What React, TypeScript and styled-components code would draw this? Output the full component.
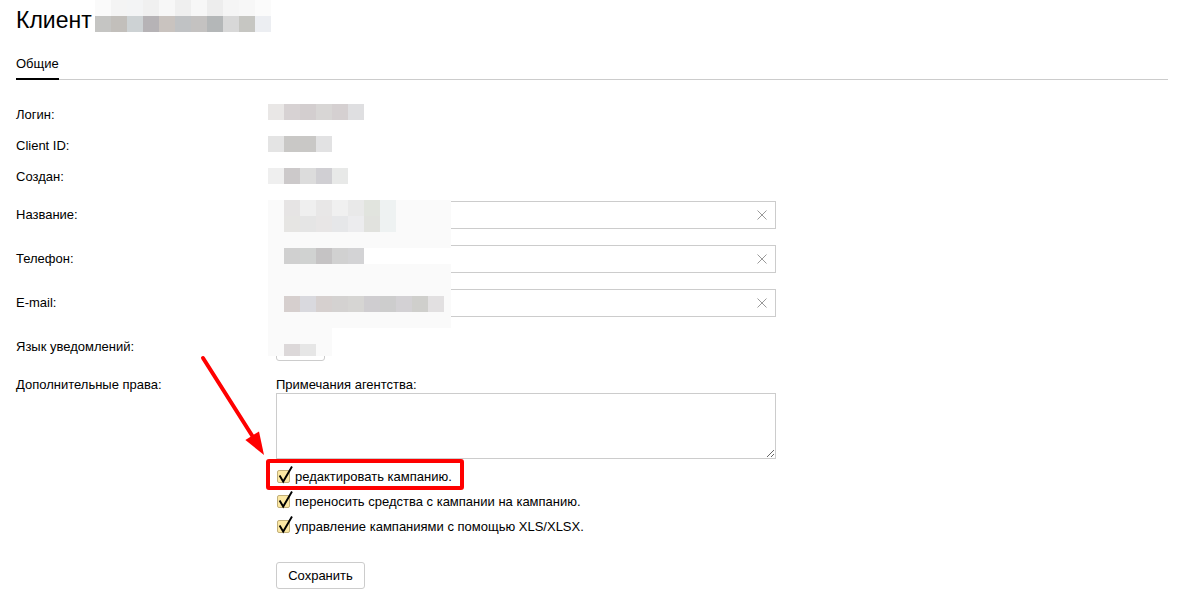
import React from "react";
import styled, { createGlobalStyle } from "styled-components";

const GlobalStyle = createGlobalStyle`
  html, body { margin: 0; padding: 0; background: #fff; }
  body {
    font-family: "Liberation Sans", Arial, sans-serif;
    font-size: 13px;
    color: #000;
  }
`;

const Page = styled.div`
  position: relative;
  padding: 0 10px 0 16px;
  height: 597px;
  box-sizing: border-box;
  overflow: hidden;
`;

const TitleRow = styled.div`
  display: flex;
  align-items: flex-start;
  height: 32px;
`;

const Title = styled.h1`
  margin: 8px 3px 0 0;
  font-size: 23px;
  line-height: 24px;
  font-weight: normal;
`;

const Mosaic = styled.div<{ $cols: string; $rows?: string; $top?: number }>`
  display: grid;
  grid-template-columns: ${(p) => p.$cols};
  grid-template-rows: ${(p) => p.$rows || "16px"};
  margin-top: ${(p) => p.$top ?? 0}px;
  align-self: start;
`;

const Cell = styled.span<{ $c: string }>`
  display: block;
  background: ${(p) => p.$c};
`;

const Overlay = styled(Mosaic)<{ $x: number; $y: number }>`
  position: absolute;
  left: ${(p) => p.$x}px;
  top: ${(p) => p.$y}px;
  margin: 0;
`;

const TabBar = styled.div`
  display: flex;
  border-bottom: 1px solid #cccccc;
`;

const Tab = styled.div<{ $active?: boolean }>`
  padding: 24px 0 6px;
  line-height: 16px;
  margin-bottom: -1px;
  border-bottom: 2px solid ${(p) => (p.$active ? "#000" : "transparent")};
`;

const Info = styled.div`
  margin-top: 19px;
`;

const InfoRow = styled.div`
  display: grid;
  grid-template-columns: 252px auto;
  height: 31px;
  line-height: 31px;
`;

const Label = styled.div`
  line-height: 16px;
`;

const InfoLabel = styled.div`
  line-height: 31px;
`;

const Form = styled.div`
  margin-top: 9px;
  display: flex;
  flex-direction: column;
  gap: 16px;
`;

const FormRow = styled.div<{ $align?: string }>`
  display: grid;
  grid-template-columns: 260px 500px;
  align-items: ${(p) => p.$align || "center"};
`;

const InputBox = styled.div`
  display: flex;
  align-items: center;
  height: 28px;
  border: 1px solid #cccccc;
  box-sizing: border-box;
  background: #fff;
`;

const TextInput = styled.input`
  flex: 1;
  min-width: 0;
  border: none;
  outline: none;
  height: 100%;
  padding: 0 8px;
  font: inherit;
  background: transparent;
`;

const ClearIcon = styled.svg`
  width: 10px;
  height: 10px;
  margin-right: 8px;
  flex: none;
`;

const SelectButton = styled.button`
  display: block;
  width: 49px;
  height: 28px;
  border: 1px solid #cccccc;
  border-radius: 3px;
  background: #fff;
  padding: 0;
`;

const NotesLabel = styled.div`
  line-height: 16px;
`;

const NotesArea = styled.textarea`
  display: block;
  width: 500px;
  height: 66px;
  margin: 0;
  border: 1px solid #cccccc;
  box-sizing: border-box;
  resize: both;
  font: inherit;
  padding: 4px 6px;
`;

const CheckList = styled.div`
  margin-top: 5px;
  display: flex;
  flex-direction: column;
`;

const CheckRow = styled.label<{ $highlight?: boolean }>`
  position: relative;
  display: flex;
  align-items: center;
  gap: 5px;
  height: 25px;
  padding-left: 1px;
  line-height: 16px;
  width: fit-content;

  &::after {
    content: "";
    display: ${(p) => (p.$highlight ? "block" : "none")};
    position: absolute;
    left: -10px;
    top: -5px;
    width: 198px;
    height: 31px;
    border: 4px solid #ff0000;
    border-radius: 3px;
    box-sizing: border-box;
  }
`;

const Box = styled.span`
  position: relative;
  flex: none;
  width: 13px;
  height: 13px;
  box-sizing: border-box;
  border: 1px solid #c2b07a;
  border-radius: 2px;
  background: #fce8a3;
`;

const CheckMark = styled.svg`
  position: absolute;
  left: -1px;
  top: -1px;
  width: 13px;
  height: 13px;
  overflow: visible;
`;

const SaveButton = styled.button`
  display: block;
  margin-top: 23px;
  width: 89px;
  height: 27px;
  border: 1px solid #cccccc;
  border-radius: 3px;
  background: #fff;
  font: inherit;
  color: #000;
  padding: 0;
`;

const Arrow = styled.svg`
  position: absolute;
  left: 195px;
  top: 350px;
  width: 80px;
  height: 112px;
  overflow: visible;
`;

const F = "#fafafa";
const T = "transparent";
const W = "#ffffff";

const titleCells = [
  ["#fafafa", "#f4f4f4", "#f3f4f5", "#f0f0f0", "#f7f7f7", "#efefef", "#f7f7f7", "#ededed", "#f5f5f5", "#f7f7f7", "#fbfbfb"],
  ["#c5c5c3", "#c2bfbb", "#cdd2d4", "#b6b3b6", "#c9c3bf", "#c0c2c4", "#c4c2c1", "#b4b7b8", "#d8d8d8", "#c6c6c2", "#eceef2"],
];

const loginCells = ["#e9e7e6", "#d7d2d3", "#d3cecf", "#d8d6d5", "#d5d0d1", "#dfdfe1"];
const idCells = ["#e4e4e4", "#c9c8c6", "#c9c8c6", "#e2e2e3"];
const createdCells = ["#efefef", "#ccc9ca", "#dcdcdc", "#d0cfd3", "#e8e9e8"];

const overlayCells: string[][] = [
  [F, "#e6e4e4", "#efefef", "#e8e7e7", "#f0f0f0", "#e9e9e9", "#e1e4de", "#eef2f2", F, F, F, F],
  [F, "#e6e5e3", "#e5e5e5", "#e8e6e6", "#e6e7e9", "#ececee", "#e1e2de", "#eef2f2", F, F, F, F],
  [F, F, F, F, F, F, F, F, F, F, F, F],
  [F, "#d0d0d0", "#d0d2d1", "#c5c3c4", "#d1d1d1", "#d3d3d5", W, W, W, W, W, W],
  [F, F, F, F, F, F, F, F, F, F, F, F],
  [F, F, F, F, F, F, F, F, F, F, F, F],
  [F, "#d6cfce", "#d9d9de", "#d6d0cf", "#d4d2d1", "#d6d5d3", "#cfcdd0", "#cdcdcd", "#d3d1d4", "#cfcfcc", "#e2e0e1", F],
  [F, F, F, F, F, F, F, F, F, F, F, F],
  [F, F, F, F, T, T, T, T, T, T, T, T],
  [F, "#dcd8d9", "#e6e6e6", F, T, T, T, T, T, T, T, T],
];

const Cells: React.FC<{ colors: string[] }> = ({ colors }) => (
  <>
    {colors.map((c, i) => (
      <Cell key={i} $c={c} />
    ))}
  </>
);

const Clear = () => (
  <ClearIcon viewBox="0 0 10 10">
    <path d="M0.5 0.5 L9.5 9.5 M9.5 0.5 L0.5 9.5" stroke="#9a9a9a" strokeWidth="1" fill="none" />
  </ClearIcon>
);

const InputField: React.FC = () => (
  <InputBox>
    <TextInput />
    <Clear />
  </InputBox>
);

const Check: React.FC<{ text: string; highlight?: boolean }> = ({ text, highlight }) => (
  <CheckRow $highlight={highlight}>
    <Box>
      <CheckMark viewBox="0 0 13 13">
        <path d="M2.6 5.6 L6.2 11.6 L15 -3.4" stroke="#000" strokeWidth="1.9" fill="none" strokeLinejoin="miter" />
      </CheckMark>
    </Box>
    <span>{text}</span>
  </CheckRow>
);

export default function App() {
  return (
    <>
      <GlobalStyle />
      <Page>
        <TitleRow>
          <Title>Клиент</Title>
          <Mosaic $cols="repeat(11, 16px)" $rows="16px 16px">
            <Cells colors={titleCells[0]} />
            <Cells colors={titleCells[1]} />
          </Mosaic>
        </TitleRow>

        <TabBar>
          <Tab $active>Общие</Tab>
        </TabBar>

        <Info>
          <InfoRow>
            <InfoLabel>Логин:</InfoLabel>
            <Mosaic $cols="repeat(6, 16px)" $top={5}>
              <Cells colors={loginCells} />
            </Mosaic>
          </InfoRow>
          <InfoRow>
            <InfoLabel>Client ID:</InfoLabel>
            <Mosaic $cols="repeat(4, 16px)" $top={6}>
              <Cells colors={idCells} />
            </Mosaic>
          </InfoRow>
          <InfoRow>
            <InfoLabel>Создан:</InfoLabel>
            <Mosaic $cols="repeat(5, 16px)" $top={7}>
              <Cells colors={createdCells} />
            </Mosaic>
          </InfoRow>
        </Info>

        <Form>
          <FormRow>
            <Label>Название:</Label>
            <InputField />
          </FormRow>
          <FormRow>
            <Label>Телефон:</Label>
            <InputField />
          </FormRow>
          <FormRow>
            <Label>E-mail:</Label>
            <InputField />
          </FormRow>
          <FormRow>
            <Label>Язык уведомлений:</Label>
            <div>
              <SelectButton aria-label="Язык" />
            </div>
          </FormRow>
          <FormRow $align="start">
            <Label>Дополнительные права:</Label>
            <div>
              <NotesLabel>Примечания агентства:</NotesLabel>
              <NotesArea />
              <CheckList>
                <Check text="редактировать кампанию." highlight />
                <Check text="переносить средства с кампании на кампанию." />
                <Check text="управление кампаниями с помощью XLS/XLSX." />
              </CheckList>
              <SaveButton>Сохранить</SaveButton>
            </div>
          </FormRow>
        </Form>

        <Overlay $x={268} $y={200} $cols="repeat(11, 16px) 7px" $rows="repeat(9, 16px) 12px">
          {overlayCells.map((row, r) => (
            <Cells key={r} colors={row} />
          ))}
        </Overlay>

        <Arrow viewBox="0 0 80 112">
          <line x1="8" y1="8" x2="58" y2="87" stroke="#ff0000" strokeWidth="4" strokeLinecap="round" />
          <polygon points="69,105 50.4,90 64,81.4" fill="#ff0000" />
        </Arrow>
      </Page>
    </>
  );
}
